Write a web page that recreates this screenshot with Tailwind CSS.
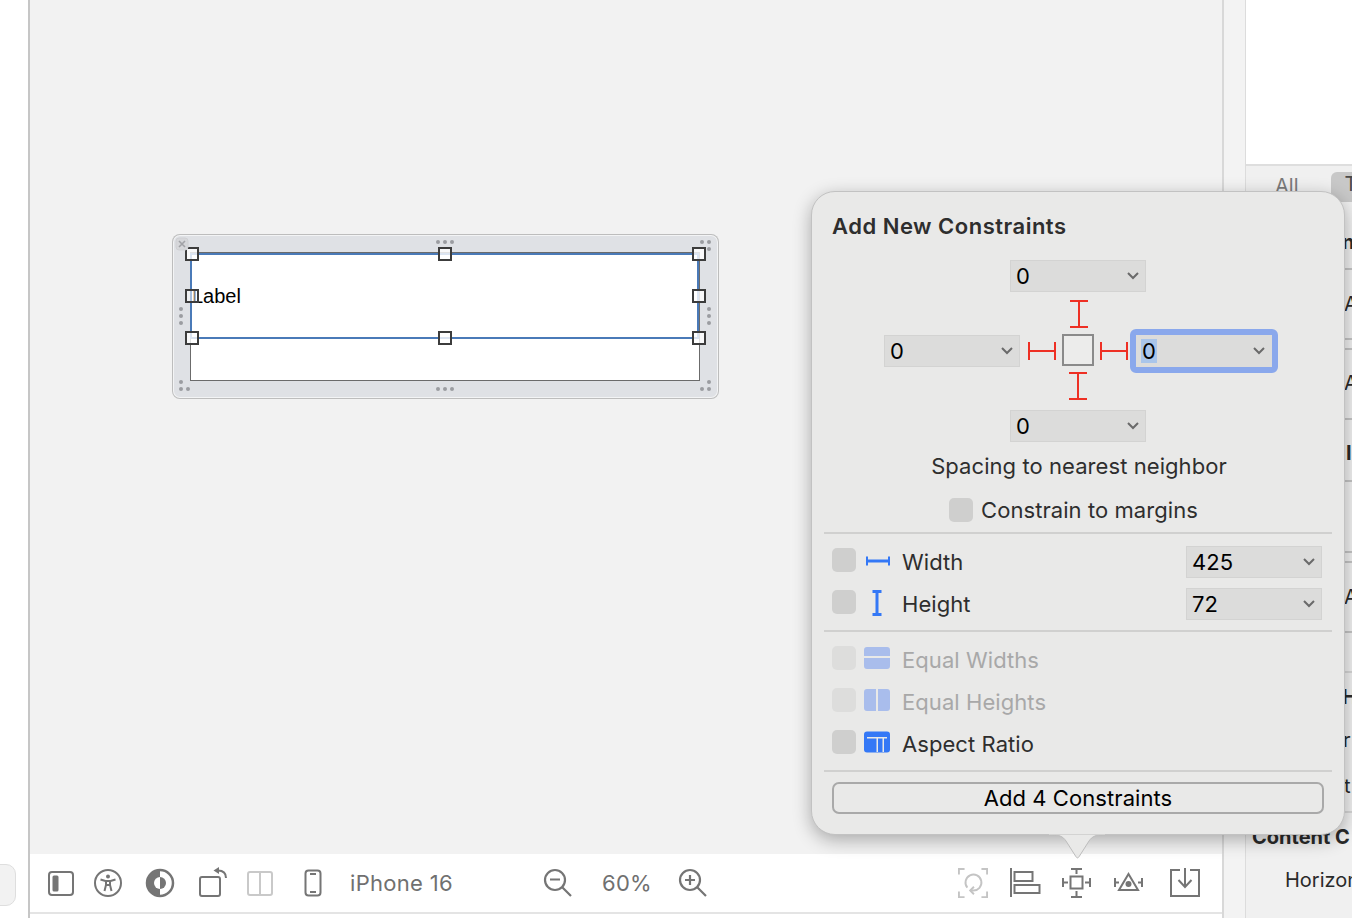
<!DOCTYPE html>
<html lang="en">
<head>
    <meta charset="UTF-8">
    <title>Add New Constraints</title>
    <script src="https://cdn.jsdelivr.net/npm/@tailwindcss/browser@4"></script>
</head>
<body class="bg-white overflow-hidden font-['Inter','Liberation_Sans',sans-serif]">
<div class="relative flex w-[1352px] h-[918px] overflow-hidden">

    <!-- left strip -->
    <div class="relative w-[30px] h-full bg-white border-r-2 border-[#c6c6c6] shrink-0">
        <div class="absolute left-[-10px] top-[864px] w-[26px] h-[42px] rounded-[10px] bg-[#f2f2f2] border border-[#dedede]"></div>
    </div>

    <!-- canvas + toolbar -->
    <div class="relative flex flex-col w-[1194px] h-full border-r-2 border-[#d8d8d8] shrink-0">
        <div class="relative h-[854px] bg-[#f2f2f2]">
            <!-- scene frame on the free canvas -->
            <div class="absolute left-[142px] top-[234px] w-[547px] h-[165px] rounded-[8px] bg-[#dfe1e5] shadow-[inset_0_0_0_1px_#bdbdbd,inset_0_0_0_2px_#f3f4f5]">
                <div class="absolute left-[18px] top-[18px] w-[510px] h-[129px] bg-white border border-[#6b6b6b]"></div>
                <!-- selected label -->
                <div class="absolute left-[18px] top-[19px] w-[509px] h-[86px] border-2 border-[#4a7ab8]"></div>
                <span class="absolute left-[20px] top-[50px] text-[20px] leading-[24px] text-black font-['Liberation_Sans',sans-serif]">Label</span>
                <!-- handles -->
                <div class="absolute left-[13px] top-[13px] w-[14px] h-[14px] bg-white/80 border-2 border-[#3c3c3c]"></div>
                <div class="absolute left-[266px] top-[13px] w-[14px] h-[14px] bg-white/80 border-2 border-[#3c3c3c]"></div>
                <div class="absolute left-[520px] top-[13px] w-[14px] h-[14px] bg-white/80 border-2 border-[#3c3c3c]"></div>
                <div class="absolute left-[13px] top-[55px] w-[14px] h-[14px] bg-white/50 border-2 border-[#3c3c3c]"></div>
                <div class="absolute left-[520px] top-[55px] w-[14px] h-[14px] bg-white/80 border-2 border-[#3c3c3c]"></div>
                <div class="absolute left-[13px] top-[97px] w-[14px] h-[14px] bg-white/80 border-2 border-[#3c3c3c]"></div>
                <div class="absolute left-[266px] top-[97px] w-[14px] h-[14px] bg-white/80 border-2 border-[#3c3c3c]"></div>
                <div class="absolute left-[520px] top-[97px] w-[14px] h-[14px] bg-white/80 border-2 border-[#3c3c3c]"></div>
                <!-- close and resize dots -->
                <svg class="absolute left-[2px] top-[2px]" width="545" height="163" viewBox="0 0 545 163" fill="#9b9ca1">
                    <rect x="2" y="2" width="12" height="12" rx="3" fill="#d6d7da" stroke="#cfd0d3"/>
                    <path d="M5 5l6 6M11 5l-6 6" stroke="#a2a3a7" stroke-width="1.6"/>
                    <circle cx="264" cy="6" r="2"/><circle cx="271" cy="6" r="2"/><circle cx="278" cy="6" r="2"/>
                    <circle cx="264" cy="153" r="2"/><circle cx="271" cy="153" r="2"/><circle cx="278" cy="153" r="2"/>
                    <circle cx="7" cy="73" r="2"/><circle cx="7" cy="80" r="2"/><circle cx="7" cy="87" r="2"/>
                    <circle cx="535" cy="73" r="2"/><circle cx="535" cy="80" r="2"/><circle cx="535" cy="87" r="2"/>
                    <circle cx="7" cy="146" r="2"/><circle cx="7" cy="153" r="2"/><circle cx="14" cy="153" r="2"/>
                    <circle cx="528" cy="6" r="2"/><circle cx="535" cy="6" r="2"/><circle cx="535" cy="13" r="2"/>
                    <circle cx="535" cy="146" r="2"/><circle cx="528" cy="153" r="2"/><circle cx="535" cy="153" r="2"/>
                </svg>
            </div>
        </div>

        <!-- bottom toolbar -->
        <div class="flex items-center h-[60px] bg-white border-b-2 border-[#e4e4e4] text-[#707070] text-[22px] tracking-[0.3px] shrink-0">
            <svg class="ml-[17px]" width="28" height="28" viewBox="0 0 28 28" fill="none" stroke="#757575" stroke-width="2"><rect x="2" y="3" width="24" height="23" rx="3"/><rect x="5.500" y="6.500" width="6" height="16" rx="1.500" fill="#757575" stroke="none"/></svg>
            <svg class="ml-[18px]" width="30" height="30" viewBox="0 0 30 30" fill="none" stroke="#757575" stroke-width="2"><circle cx="15" cy="15" r="13"/><circle cx="15" cy="8.500" r="2" fill="#757575" stroke="none"/><path d="M7.500 11.500l5 1.500h5l5-1.500M13 13v4l-1.500 6M17 13v4l1.500 6M13 17h4"/></svg>
            <svg class="ml-[22px]" width="30" height="30" viewBox="0 0 30 30"><circle cx="15" cy="15" r="13" fill="#fff" stroke="#757575" stroke-width="2.500"/><path d="M15 2a13 13 0 0 0 0 26z" fill="#757575"/><path d="M15 9a6 6 0 0 0 0 12z" fill="#fff"/><path d="M15 9a6 6 0 0 1 0 12z" fill="#757575"/></svg>
            <svg class="ml-[21px]" width="32" height="32" viewBox="0 0 32 32" fill="none" stroke="#757575" stroke-width="2"><rect x="4" y="10" width="20" height="19" rx="2"/><path d="M30 11c0-5-3-7.500-8-7.500"/><path d="M23 0l-5.500 3.500L23 7z" fill="#757575" stroke="none"/></svg>
            <svg class="ml-[18px]" width="28" height="28" viewBox="0 0 28 28" fill="none" stroke="#c9c9c9" stroke-width="2"><rect x="2" y="3" width="24" height="23" rx="2"/><path d="M14 3v23"/></svg>
            <svg class="ml-[30px]" width="18" height="28" viewBox="0 0 18 28" fill="none" stroke="#757575" stroke-width="2"><rect x="1.500" y="1.500" width="15" height="25" rx="3"/><path d="M6 5h6M6 23h6"/></svg>
            <span class="ml-[28px] w-[193px]">iPhone 16</span>
            <svg width="30" height="30" viewBox="0 0 30 30" fill="none" stroke="#757575" stroke-width="2.200"><circle cx="12" cy="12" r="10"/><path d="M7 11.500h10M19 19l9 9"/></svg>
            <span class="ml-[29px] w-[76px]">60%</span>
            <svg width="30" height="30" viewBox="0 0 30 30" fill="none" stroke="#757575" stroke-width="2.200"><circle cx="12" cy="12" r="10"/><path d="M7 12h10M12 7v10M19 19l9 9"/></svg>
            <svg class="ml-[250px]" width="30" height="30" viewBox="0 0 32 32" fill="none" stroke="#c4c4c4" stroke-width="2"><path d="M1 7V1h6M25 1h6v6M1 25v6h6M31 25v6h-6"/><path d="M10 21a8.500 8.500 0 1 1 6 3h-3"/><path d="M17 20l-4 4 4 4"/></svg>
            <svg class="ml-[21px]" width="32" height="32" viewBox="0 0 32 32" fill="none" stroke="#757575" stroke-width="2"><path d="M2 1v29"/><rect x="5.500" y="5" width="18" height="9"/><rect x="5.500" y="18" width="25" height="8"/></svg>
            <svg class="ml-[20px]" width="32" height="32" viewBox="0 0 32 32" fill="none" stroke="#757575" stroke-width="2"><rect x="9.500" y="9.500" width="12" height="12"/><path d="M10 2h11M15.500 2v5M10 30h11M15.500 24v6M2 11v9M2 15.500h5M29 11v9M24 15.500h5"/></svg>
            <svg class="ml-[20px]" width="32" height="32" viewBox="0 0 32 32" fill="none" stroke="#757575" stroke-width="2"><path d="M15.500 7L25 23H6z"/><circle cx="15.500" cy="17" r="3" fill="#757575" stroke="none"/><path d="M2 11v9M2 15.500h4M29 11v9M25 15.500h4"/></svg>
            <svg class="ml-[24px]" width="32" height="32" viewBox="0 0 32 32" fill="none" stroke="#757575" stroke-width="2"><path d="M11 3H2v26h28V3h-9"/><path d="M16 1v18M9.500 13l6.500 7 6.500-7"/></svg>
        </div>
    </div>

    <!-- gutter -->
    <div class="w-[21px] h-full bg-[#f3f3f3] shrink-0"></div>

    <!-- inspector, mostly behind the popover -->
    <div class="flex-1 h-full flex flex-col bg-[#f0f0f0] border-l border-[#dcdcdc] overflow-hidden whitespace-nowrap text-[20px] text-[#2a2a2a]">
        <div class="h-[166px] bg-white border-b-2 border-[#dedede] shrink-0"></div>
        <div class="h-[38px] flex items-start pl-[29px] text-[#7a7a7a] shrink-0"><span class="mt-[5px]">All</span><span class="ml-[32px] mt-[6px] pl-[14px] pr-4 h-[30px] rounded-[6px] bg-[#c8c8c8] text-[#4a4a4a] leading-[24px]">T</span></div>
        <div class="h-[66px] pl-[96px] pt-[23px] font-bold border-b-2 border-[#c4c4c4] shrink-0">n</div>
        <div class="h-[70px] pl-[98px] pt-[19px] border-b-2 border-[#c4c4c4] shrink-0">A</div>
        <div class="h-[10px] border-b-2 border-[#c4c4c4] shrink-0"></div>
        <div class="h-[70px] pl-[98px] pt-[18px] border-b-2 border-[#c4c4c4] shrink-0">Al</div>
        <div class="h-[62px] pl-[100px] pt-[18px] font-bold border-b-2 border-[#c4c4c4] shrink-0">I</div>
        <div class="h-[71px] border-b-2 border-[#c4c4c4] shrink-0"></div>
        <div class="h-[10px] border-b-2 border-[#c4c4c4] shrink-0"></div>
        <div class="h-[70px] pl-[98px] pt-[19px] border-b-2 border-[#c4c4c4] shrink-0">A</div>
        <div class="h-[40px] border-b-2 border-[#d6d6d6] shrink-0"></div>
        <div class="h-[50px] pl-[96px] pt-[9px] font-bold shrink-0">H</div>
        <div class="h-[40px] pl-[85px] pt-[2px] shrink-0">or</div>
        <div class="h-[50px] pl-[98px] pt-[8px] border-b-2 border-[#d6d6d6] shrink-0">t</div>
        <div class="pl-[6px] pt-[9px] font-bold shrink-0">Content C</div>
        <div class="pl-[39px] pt-[13px]">Horizontal</div>
    </div>

    <!-- popover -->
    <div class="absolute left-[811px] top-[191px] w-[534px] h-[644px] rounded-[24px] bg-[#e9e9e8] border border-[#c2c2c2] shadow-[0_5px_18px_rgba(0,0,0,0.3)] text-[22px] leading-[24px] tracking-[0.07px] text-[#2e2e2e]">
        <div class="ml-[20px] mt-[22px] font-semibold tracking-[0.5px]">Add New Constraints</div>

        <div class="ml-[198px] mt-[22px] w-[136px] h-[32px] flex items-center justify-between pl-[5px] pr-[6px] bg-[#dcdcdb] border border-[#d3d3d2] text-black">0<svg width="12" height="8" viewBox="0 0 12 8" fill="none" stroke="#6a6a6a" stroke-width="2"><path d="M1 1l5 5 5-5"/></svg></div>

        <svg class="ml-[258px] mt-[8px] block" width="18" height="28" viewBox="0 0 18 28" fill="none" stroke="#ee3024" stroke-width="2"><path d="M0 1h18M9 1v26M0 27h18"/></svg>

        <div class="flex items-center ml-[72px] mt-[3px] h-[40px]">
            <div class="w-[136px] h-[32px] flex items-center justify-between pl-[5px] pr-[6px] bg-[#dcdcdb] border border-[#d3d3d2] text-black">0<svg width="12" height="8" viewBox="0 0 12 8" fill="none" stroke="#6a6a6a" stroke-width="2"><path d="M1 1l5 5 5-5"/></svg></div>
            <svg class="ml-[8px]" width="28" height="18" viewBox="0 0 28 18" fill="none" stroke="#ee3024" stroke-width="2"><path d="M1 0v18M1 9h26M27 0v18"/></svg>
            <div class="ml-[6px] -mt-[2px] w-[32px] h-[32px] bg-[#ececeb] border-2 border-[#8a8a8a]"></div>
            <svg class="ml-[6px]" width="28" height="18" viewBox="0 0 28 18" fill="none" stroke="#ee3024" stroke-width="2"><path d="M1 0v18M1 9h26M27 0v18"/></svg>
            <div class="ml-[2px] w-[148px] h-[44px] rounded-[6px] border-[6px] border-[#8aa8ec] flex items-center justify-between pl-[5px] pr-[7px] bg-[#dcdcdb] text-black"><span class="bg-[#a9c5ea] px-px">0</span><svg width="12" height="8" viewBox="0 0 12 8" fill="none" stroke="#6a6a6a" stroke-width="2"><path d="M1 1l5 5 5-5"/></svg></div>
        </div>

        <svg class="ml-[257px] mt-[1px] block" width="18" height="28" viewBox="0 0 18 28" fill="none" stroke="#ee3024" stroke-width="2"><path d="M0 1h18M9 1v26M0 27h18"/></svg>

        <div class="ml-[198px] mt-[10px] w-[136px] h-[32px] flex items-center justify-between pl-[5px] pr-[6px] bg-[#dcdcdb] border border-[#d3d3d2] text-black">0<svg width="12" height="8" viewBox="0 0 12 8" fill="none" stroke="#6a6a6a" stroke-width="2"><path d="M1 1l5 5 5-5"/></svg></div>

        <div class="mt-[12px] text-center ml-[2px]">Spacing to nearest neighbor</div>

        <div class="flex items-center mt-[20px] ml-[137px]">
            <div class="w-[24px] h-[24px] rounded-[5px] bg-[#cfcfce]"></div>
            <span class="ml-[8px]">Constrain to margins</span>
        </div>

        <div class="mx-[12px] mt-[10px] h-[2px] bg-[#d0d0cf]"></div>

        <div class="flex items-center ml-[20px] mt-[12px] h-[32px]">
            <div class="w-[24px] h-[24px] rounded-[5px] bg-[#cfcfce] -mt-[4px]"></div>
            <svg class="ml-[10px] -mt-[2px]" width="24" height="12" viewBox="0 0 24 12" fill="none" stroke="#3478f6"><path d="M1 1.500v9M23 1.500v9" stroke-width="2"/><path d="M1 6h22" stroke-width="3"/></svg>
            <span class="ml-[12px] w-[284px]">Width</span>
            <div class="w-[136px] h-[32px] flex items-center justify-between pl-[5px] pr-[6px] bg-[#dcdcdb] border border-[#d3d3d2] text-black">425<svg width="12" height="8" viewBox="0 0 12 8" fill="none" stroke="#6a6a6a" stroke-width="2"><path d="M1 1l5 5 5-5"/></svg></div>
        </div>
        <div class="flex items-center ml-[20px] mt-[10px] h-[32px]">
            <div class="w-[24px] h-[24px] rounded-[5px] bg-[#cfcfce] -mt-[4px]"></div>
            <svg class="ml-[9px] mr-[1px] -mt-[2px]" width="24" height="26" viewBox="0 0 24 26" fill="none" stroke="#3478f6" stroke-width="3"><path d="M7.500 1.500h9M12 1.500v23M7.500 24.500h9"/></svg>
            <span class="ml-[12px] w-[284px]">Height</span>
            <div class="w-[136px] h-[32px] flex items-center justify-between pl-[5px] pr-[6px] bg-[#dcdcdb] border border-[#d3d3d2] text-black">72<svg width="12" height="8" viewBox="0 0 12 8" fill="none" stroke="#6a6a6a" stroke-width="2"><path d="M1 1l5 5 5-5"/></svg></div>
        </div>

        <div class="mx-[12px] mt-[10px] h-[2px] bg-[#d0d0cf]"></div>

        <div class="flex items-center ml-[20px] mt-[14px] h-[24px] text-[#a8a8a8]">
            <div class="w-[24px] h-[24px] rounded-[5px] bg-[#dddddc]"></div>
            <svg class="ml-[8px]" width="26" height="22" viewBox="0 0 26 22" fill="#a9bdec"><path d="M0 3a3 3 0 0 1 3-3h20a3 3 0 0 1 3 3v6H0zM0 11h26v8a3 3 0 0 1-3 3H3a3 3 0 0 1-3-3z"/></svg>
            <span class="ml-[12px] mt-[4px]">Equal Widths</span>
        </div>
        <div class="flex items-center ml-[20px] mt-[18px] h-[24px] text-[#a8a8a8]">
            <div class="w-[24px] h-[24px] rounded-[5px] bg-[#dddddc]"></div>
            <svg class="ml-[8px]" width="26" height="22" viewBox="0 0 26 22" fill="#a9bdec"><path d="M12 0H3a3 3 0 0 0-3 3v16a3 3 0 0 0 3 3h9zM14 0h9a3 3 0 0 1 3 3v16a3 3 0 0 1-3 3h-9z"/></svg>
            <span class="ml-[12px] mt-[4px]">Equal Heights</span>
        </div>
        <div class="flex items-center ml-[20px] mt-[18px] h-[24px]">
            <div class="w-[24px] h-[24px] rounded-[5px] bg-[#cfcfce]"></div>
            <svg class="ml-[8px]" width="26" height="22" viewBox="0 0 26 22"><rect width="26" height="21" y="0.500" rx="3" fill="#3478f6"/><path d="M3 6h20v1.500h-3V21h-1.500V7.500H14V21h-1.500V7.500H3z" fill="#e9e9e8"/></svg>
            <span class="ml-[12px] mt-[4px]">Aspect Ratio</span>
        </div>

        <div class="mx-[12px] mt-[16px] h-[2px] bg-[#d0d0cf]"></div>

        <div class="ml-[20px] mt-[10px] w-[492px] h-[32px] rounded-[7px] border-2 border-[#a9a9a9] flex items-center justify-center text-black">Add 4 Constraints</div>
    </div>
    <!-- popover arrow -->
    <svg class="absolute left-[1045px] top-[832px]" width="64" height="30" viewBox="0 0 64 30"><path d="M5 2.500c9 0 13 2 16 6.500l9.500 15c1.500 2.500 2.500 2.500 4 0L44 9c3-4.500 7-6.500 16-6.500z" fill="#e9e9e8" stroke="#bdbdbd"/><path d="M4 0h56v2.600H4z" fill="#e9e9e8"/></svg>
</div>
</body>
</html>
